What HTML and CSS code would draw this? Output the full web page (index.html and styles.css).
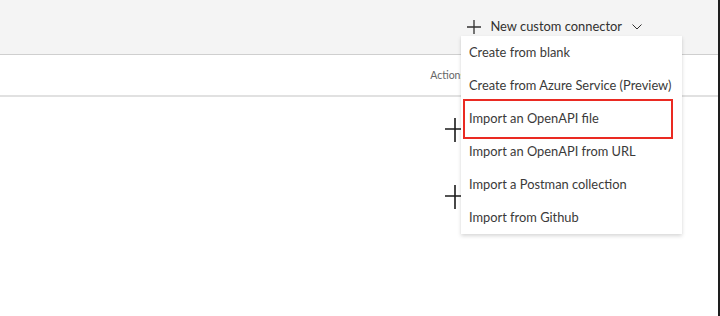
FILE: index.html
```html
<!DOCTYPE html>
<html lang="en">
<head>
<meta charset="utf-8">
<title>Custom connectors</title>
<link rel="stylesheet" href="styles.css">
</head>
<body>
<div class="page">
  <header class="header">
    <button class="cmd" type="button">
      <svg class="cmd-plus" width="16" height="16" viewBox="0 0 16 16" aria-hidden="true"><path d="M8 1v14M1 8h14" stroke="#323130" stroke-width="1.3" fill="none"/></svg>
      <span class="cmd-label">New custom connector</span>
      <svg class="cmd-chev" width="10" height="6" viewBox="0 0 10 6" aria-hidden="true"><path d="M0.5 0.5L5 5L9.5 0.5" stroke="#323130" stroke-width="1" fill="none"/></svg>
    </button>
  </header>
  <div class="colbar">
    <span class="colhead">Actions</span>
  </div>
  <main class="content">
    <div class="addcol">
      <svg class="bigplus" width="20" height="24" viewBox="0 0 20 24" aria-hidden="true"><path d="M10 0v24M0 11h20" stroke="#1b1b1b" stroke-width="1.6" fill="none"/></svg>
      <svg class="bigplus" width="20" height="24" viewBox="0 0 20 24" aria-hidden="true"><path d="M10 0v24M0 11h20" stroke="#1b1b1b" stroke-width="1.6" fill="none"/></svg>
    </div>
  </main>
  <ul class="menu" role="menu">
    <li class="menu-item" role="menuitem">Create from blank</li>
    <li class="menu-item" role="menuitem">Create from Azure Service (Preview)</li>
    <li class="menu-item is-marked" role="menuitem">Import an OpenAPI file</li>
    <li class="menu-item" role="menuitem">Import an OpenAPI from URL</li>
    <li class="menu-item" role="menuitem">Import a Postman collection</li>
    <li class="menu-item" role="menuitem">Import from Github</li>
  </ul>
</div>
</body>
</html>
```
FILE: styles.css
```css
* { box-sizing: border-box; }
html, body { margin: 0; padding: 0; background: #ffffff; }
body { width: 720px; height: 316px; overflow: hidden; font-family: "Lato", "Noto Sans", sans-serif; color: #323130; }

.page {
  position: relative;
  width: 720px;
  height: 316px;
  display: flex;
  flex-direction: column;
  border-right: 2px solid #1e1e1e;
  background: #ffffff;
}

.header {
  height: 55px;
  flex: none;
  background: #f4f4f4;
  border-bottom: 1px solid #cfcfcf;
  display: flex;
  justify-content: flex-end;
  align-items: flex-start;
  padding: 18px 76px 0 0;
}

.cmd {
  display: flex;
  align-items: center;
  border: 0;
  background: transparent;
  padding: 0;
  font: inherit;
  font-size: 12.9px;
  color: #323130;
  height: 17px;
}
.cmd-plus { margin-right: 8px; }
.cmd-label { line-height: 17px; }
.cmd-chev { margin-left: 10px; margin-top: 1px; }

.colbar {
  height: 42px;
  flex: none;
  border-bottom: 2px solid #e1e1e1;
  display: flex;
  justify-content: flex-end;
  align-items: center;
  padding-right: 253px;
  padding-bottom: 1px;
}
.colhead { font-size: 10.5px; color: #666666; }

.content {
  flex: 1;
  display: flex;
  justify-content: flex-end;
  padding-right: 253px;
  padding-top: 21px;
}
.addcol {
  display: flex;
  flex-direction: column;
  gap: 43px;
}
.bigplus { display: block; }

.menu {
  position: absolute;
  left: 461px;
  top: 36px;
  width: 221px;
  margin: 0;
  padding: 0;
  list-style: none;
  background: #ffffff;
  box-shadow: 0 1.6px 4px rgba(0,0,0,0.16), 0 0.3px 1px rgba(0,0,0,0.1);
}
.menu-item {
  position: relative;
  height: 33px;
  line-height: 33px;
  padding-left: 8px;
  font-size: 12.85px;
  color: #3b3a39;
  white-space: nowrap;
}
.menu-item.is-marked::after {
  content: "";
  position: absolute;
  left: 2px;
  right: 9px;
  top: -3px;
  bottom: -4px;
  border: 2px solid #ea2a22;
}
```
